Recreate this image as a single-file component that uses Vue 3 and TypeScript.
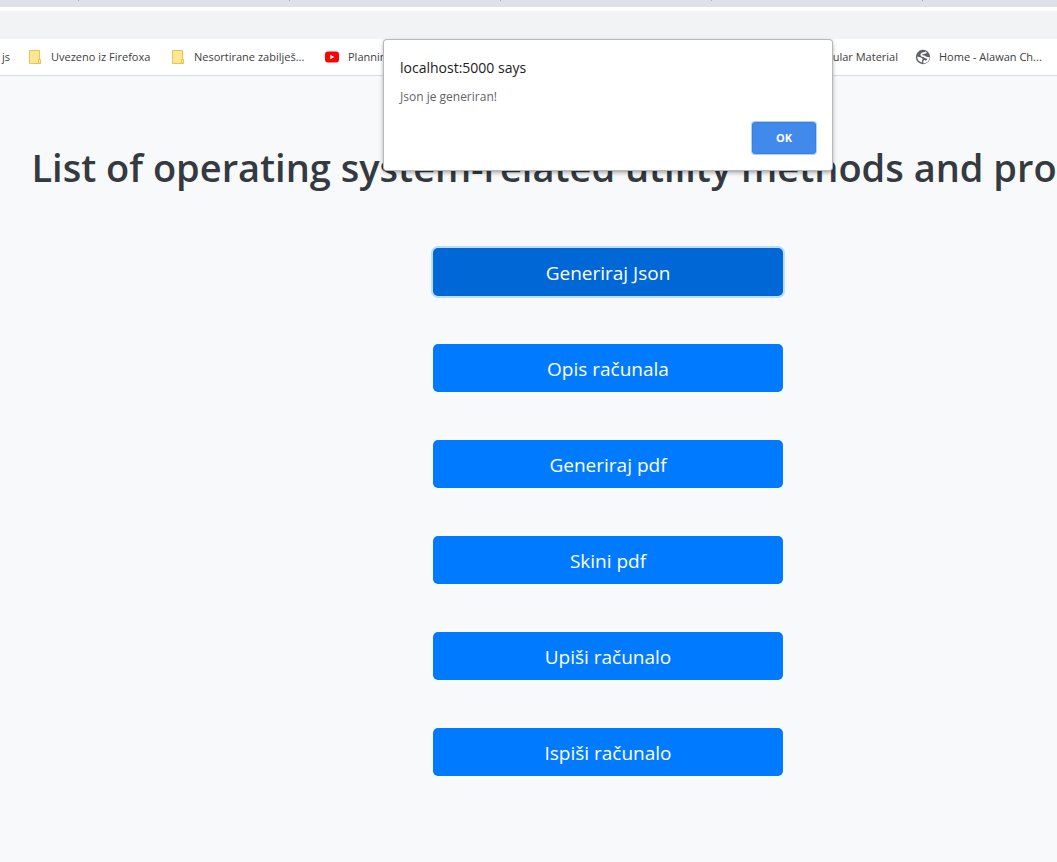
<script setup lang="ts">
import { ref } from 'vue'

const actions: string[] = [
  'Generiraj Json',
  'Opis računala',
  'Generiraj pdf',
  'Skini pdf',
  'Upiši računalo',
  'Ispiši računalo',
]
const active = ref(0)
const alertOpen = ref(true)
</script>

<template>
  <div class="screen">
    <header class="browser">
      <div class="tabs"><i v-for="n in 5" :key="n"></i></div>
      <div class="toolbar"><div class="address"></div></div>
      <nav class="bookmarks" aria-label="Bookmarks">
        <a href="#" class="first">js</a>
        <a href="#" class="folder-one">
          <svg width="14" height="16" viewBox="0 0 14 16">
            <path d="M1.5 1.5h10v9.5h1v3.5h-11z" fill="#ffe694" stroke="#e9c54c" />
            <path d="M10.5 14V10.5h2v4z" fill="#ffe694" stroke="#e9c54c" />
          </svg>
          <span>Uvezeno iz Firefoxa</span>
        </a>
        <a href="#" class="folder-two">
          <svg width="14" height="16" viewBox="0 0 14 16">
            <path d="M1.5 1.5h10v9.5h1v3.5h-11z" fill="#ffe694" stroke="#e9c54c" />
            <path d="M10.5 14V10.5h2v4z" fill="#ffe694" stroke="#e9c54c" />
          </svg>
          <span>Nesortirane zabilješ...</span>
        </a>
        <a href="#" class="video">
          <svg width="16" height="16" viewBox="0 0 16 16">
            <rect x="1" y="2.5" width="14" height="11" rx="3" fill="#f00" />
            <path d="M6.3 5.7v4.6l4-2.3z" fill="#fff" />
          </svg>
          <span>Planning</span>
        </a>
        <a href="#" class="material">Angular Material</a>
        <a href="#" class="home">
          <svg width="16" height="16" viewBox="0 0 16 16">
            <circle cx="8" cy="8" r="7.2" fill="#5f6368" />
            <path d="M11.3 3.2C9.8 4.700 7.400 3.600 6.400 5.200c-.6 1.300.6 1.800 1.900 2 1.600.2 1.700 1.300 3 1.500 1 .2 2 0 2.500.3-.6 2.200-2.200 4-4.600 4.500-.5-1 .5-1.500 0-2.300" fill="none" stroke="#fff" stroke-width="1.7" />
            <path d="M2.200 7.400c1.900.8 4.200.6 5.200 2 .7 1.200-.8 1.800-.2 3.900C4.300 13 2.200 10.700 2.200 7.400z" fill="#fff" />
          </svg>
          <span>Home - Alawan Ch...</span>
        </a>
      </nav>
    </header>

    <main>
      <h1>List of operating system-related utility methods and properties</h1>
      <div class="actions">
        <button
          v-for="(label, i) in actions"
          :key="label"
          type="button"
          :class="{ active: i === active }"
          @click="active = i"
        >{{ label }}</button>
      </div>
    </main>

    <div v-if="alertOpen" class="overlay">
      <section class="alert" role="alertdialog" aria-labelledby="alert-title" aria-describedby="alert-text">
        <h2 id="alert-title">localhost:5000 says</h2>
        <p id="alert-text">Json je generiran!</p>
        <button type="button" @click="alertOpen = false">OK</button>
      </section>
    </div>
  </div>
</template>

<style>
html,
body {
  background: #f8f9fb;
}
</style>

<style scoped>
.screen {
  position: relative;
  min-height: 100vh;
  overflow: hidden;
  background: #f8f9fb;
  font-family: "Open Sans", "Noto Sans", sans-serif;
}
.browser {
  background: #fff;
  border-bottom: 1px solid #d9dbde;
}
.tabs {
  display: flex;
  gap: 210px;
  height: 7px;
  padding-left: 78px;
  overflow: hidden;
  background: #dee1e6;
}
.tabs i {
  flex: none;
  width: 1px;
  height: 1px;
  background: #a5a8ad;
}
.toolbar {
  padding-top: 4px;
}
.address {
  height: 28px;
  background: #f1f3f4;
}
.bookmarks {
  display: flex;
  align-items: center;
  height: 36px;
  padding-right: 10px;
  font-size: 11px;
  line-height: 16px;
  white-space: nowrap;
}
.bookmarks a {
  display: flex;
  flex: none;
  align-items: center;
  color: #3c4043;
  text-decoration: none;
}
.bookmarks svg {
  flex: none;
}
.first {
  padding-left: 2px;
  width: 26px;
}
.folder-one,
.folder-two {
  gap: 9px;
}
.folder-one {
  width: 143px;
}
.folder-two {
  width: 153px;
}
.video {
  gap: 8px;
}
.bookmarks .material {
  margin-left: auto;
  margin-right: 17px;
}
.home {
  gap: 8px;
  width: 132px;
}
main {
  display: flex;
  flex-direction: column;
  align-items: center;
  padding: 67px 0 86px 159px;
}
h1 {
  margin: 0;
  color: #343a40;
  font-size: 38px;
  font-weight: 600;
  line-height: 48px;
  white-space: nowrap;
}
.actions {
  display: grid;
  gap: 48px;
  width: 350px;
  margin-top: 57px;
}
.actions button {
  height: 48px;
  padding: 2px 0 0;
  border: 0;
  border-radius: 5px;
  background: #007bff;
  color: #fff;
  font: 400 19px/30px "Open Sans", "Noto Sans", sans-serif;
}
.actions .active {
  background: #0067d6;
  box-shadow: 0 0 0 2px #bcdcfc;
}
.overlay {
  position: absolute;
  top: 40px;
  left: 159px;
  right: 0;
  display: flex;
  justify-content: center;
}
.alert {
  display: flex;
  flex-direction: column;
  box-sizing: border-box;
  width: 448px;
  padding: 18px 16px 16px;
  border-radius: 3px;
  background: #fff;
  box-shadow: 0 0 0 1px #b6b8ba, 0 2px 5px #00000070;
}
.alert h2 {
  margin: 0;
  color: #202124;
  font-size: 14px;
  font-weight: 400;
  line-height: 20px;
}
.alert p {
  margin: 9px 0 0;
  color: #5f6368;
  font-size: 12px;
  line-height: 20px;
}
.alert button {
  align-self: flex-end;
  width: 64px;
  height: 32px;
  margin-top: 15px;
  padding: 0;
  border: 1px solid #3680e2;
  border-radius: 3px;
  background: #4189eb;
  box-shadow: 0 0 0 1px #b3d0f8;
  color: #fff;
  font: 700 11px/20px "Open Sans", "Noto Sans", sans-serif;
}
</style>
